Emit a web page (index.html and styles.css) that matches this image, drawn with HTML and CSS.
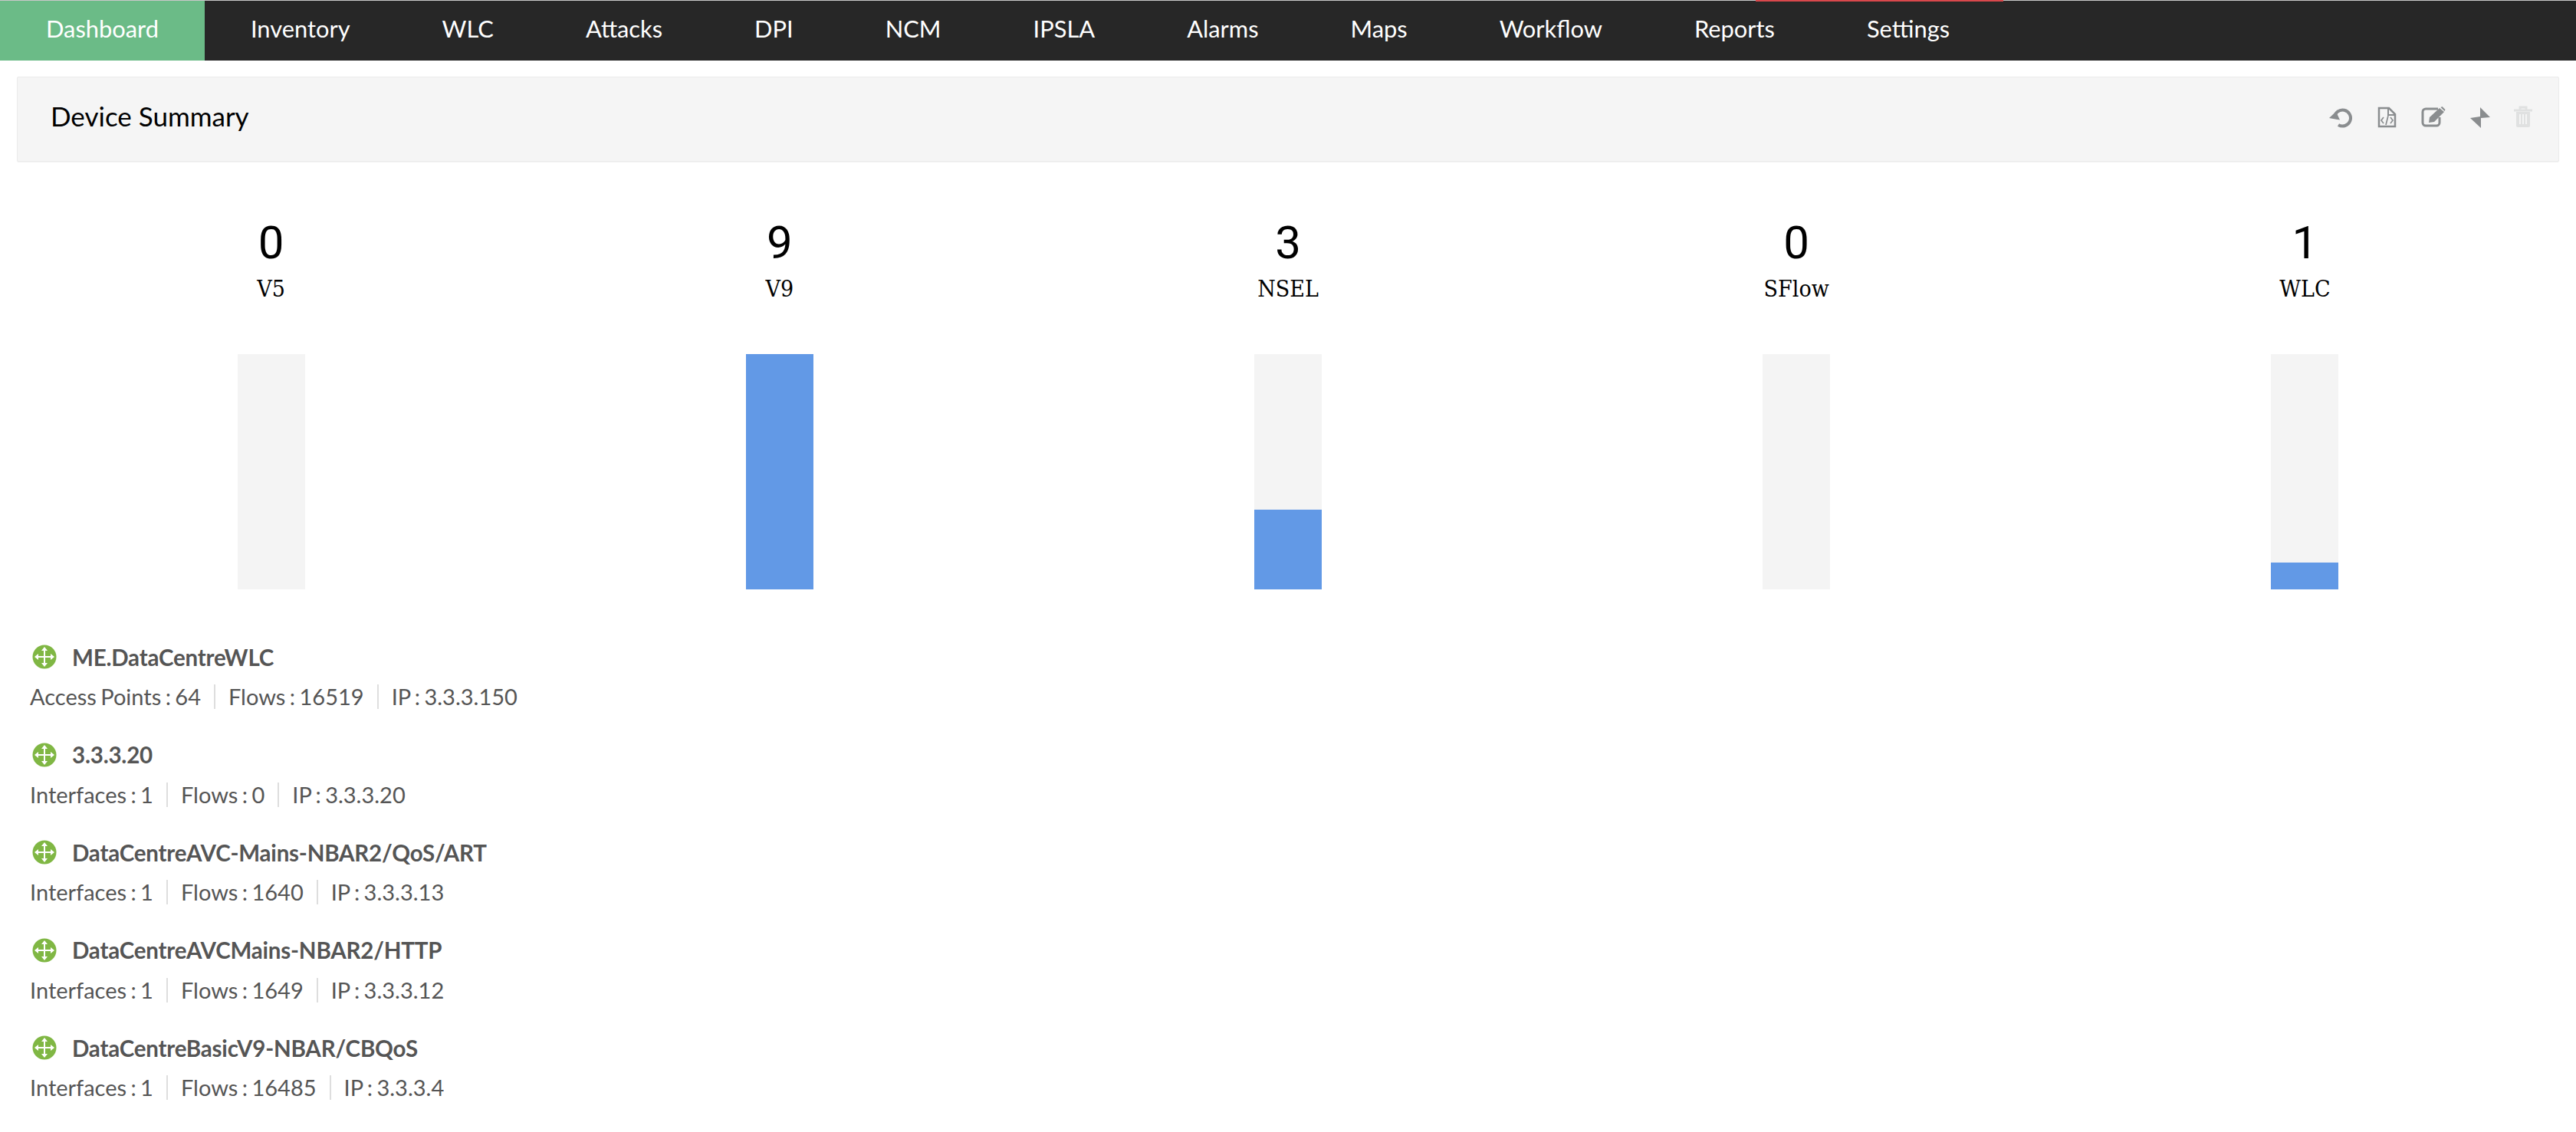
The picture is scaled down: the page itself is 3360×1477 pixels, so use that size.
FILE: index.html
```html
<!DOCTYPE html>
<html>
<head>
  <title>Device Summary</title>
  <link rel="stylesheet" href="styles.css">
</head>
<body>
  <svg class="defs" width="0" height="0">
    <symbol id="moveIcon" viewBox="0 0 32 32">
      <ellipse cx="16" cy="16" rx="15.500" ry="15.500" fill="#80b744"/>
      <path d="M16 6v20M6 16h20" stroke="#fff" stroke-width="2" fill="none"/>
      <path d="M16 3l4 5h-8zM16 29l-4-5h8zM3 16l5-4v8zM29 16l-5 4v-8z" fill="#fff"/>
    </symbol>
  </svg>

  <nav class="topnav">
    <a class="navItem active">Dashboard</a>
    <a class="navItem">Inventory</a>
    <a class="navItem">WLC</a>
    <a class="navItem">Attacks</a>
    <a class="navItem">DPI</a>
    <a class="navItem">NCM</a>
    <a class="navItem">IPSLA</a>
    <a class="navItem">Alarms</a>
    <a class="navItem">Maps</a>
    <a class="navItem">Workflow</a>
    <a class="navItem">Reports</a>
    <a class="navItem">Settings</a>
    <span class="alertLine"></span>
  </nav>

  <header class="panelHead">
    <h2>Device Summary</h2>
    <div class="tools">
      <svg class="tool" viewBox="0 0 30 30">
        <path d="M7 15.500a10.500 10.500 0 1 1 5 9.500" fill="none" stroke="#8a8d8f" stroke-width="4"/>
        <path d="M0 16l9-8.500 5 11z" fill="#8a8d8f"/>
      </svg>
      <svg class="tool" viewBox="0 0 30 30">
        <path d="M5 3h13l8 8v16H5z" fill="none" stroke="#8a8d8f" stroke-width="2.500"/>
        <path d="M17 2v10h9" fill="none" stroke="#8a8d8f" stroke-width="2"/>
        <path d="M11 15l-3 4 3 4M20 15l3 4-3 4M17 13l-3 12" fill="none" stroke="#8a8d8f" stroke-width="1.700"/>
      </svg>
      <svg class="tool toolWide" viewBox="0 0 32 27">
        <path d="M22 3H6a4 4 0 0 0-4 4v14a4 4 0 0 0 4 4h14a4 4 0 0 0 4-4v-7" fill="none" stroke="#8a8d8f" stroke-width="3"/>
        <path d="M11 14L24 2l6 5-13 13-7 1zM25.500 1l2-1 4 4-1 2z" fill="#8a8d8f"/>
      </svg>
      <svg class="tool" viewBox="0 0 30 30">
        <path d="M15 2l13 13-12 1v13L2 16l13-2z" fill="#8a8d8f"/>
      </svg>
      <svg class="tool toolLast" viewBox="0 0 30 30">
        <path d="M3 6h24M11 5V2h8v3" fill="none" stroke="#e0e1e1" stroke-width="3"/>
        <path d="M6 8v18a2 2 0 0 0 2 2h14a2 2 0 0 0 2-2V8z" fill="#e0e1e1"/>
        <path d="M11 11v13M15 11v13M19 11v13" stroke="#f5f5f5" stroke-width="2"/>
      </svg>
    </div>
  </header>

  <section class="stats">
    <div class="stat">
      <div class="statNum">0</div>
      <div class="statName">V5</div>
      <div class="bar"></div>
    </div>
    <div class="stat">
      <div class="statNum">9</div>
      <div class="statName">V9</div>
      <div class="bar"><div class="barFill" style="height: 100%"></div></div>
    </div>
    <div class="stat">
      <div class="statNum">3</div>
      <div class="statName">NSEL</div>
      <div class="bar"><div class="barFill" style="height: 33.8%"></div></div>
    </div>
    <div class="stat">
      <div class="statNum">0</div>
      <div class="statName">SFlow</div>
      <div class="bar"></div>
    </div>
    <div class="stat">
      <div class="statNum">1</div>
      <div class="statName">WLC</div>
      <div class="bar"><div class="barFill" style="height: 11.300%"></div></div>
    </div>
  </section>

  <ul class="devices">
    <li class="device">
      <div class="deviceName"><svg class="moveIcon"><use href="#moveIcon"/></svg>ME.DataCentreWLC</div>
      <div class="deviceMeta"><span>Access Points : 64</span><span>Flows : 16519</span><span>IP : 3.3.3.150</span></div>
    </li>
    <li class="device">
      <div class="deviceName"><svg class="moveIcon"><use href="#moveIcon"/></svg>3.3.3.20</div>
      <div class="deviceMeta"><span>Interfaces : 1</span><span>Flows : 0</span><span>IP : 3.3.3.20</span></div>
    </li>
    <li class="device">
      <div class="deviceName"><svg class="moveIcon"><use href="#moveIcon"/></svg>DataCentreAVC-Mains-NBAR2/QoS/ART</div>
      <div class="deviceMeta"><span>Interfaces : 1</span><span>Flows : 1640</span><span>IP : 3.3.3.13</span></div>
    </li>
    <li class="device">
      <div class="deviceName"><svg class="moveIcon"><use href="#moveIcon"/></svg>DataCentreAVCMains-NBAR2/HTTP</div>
      <div class="deviceMeta"><span>Interfaces : 1</span><span>Flows : 1649</span><span>IP : 3.3.3.12</span></div>
    </li>
    <li class="device">
      <div class="deviceName"><svg class="moveIcon"><use href="#moveIcon"/></svg>DataCentreBasicV9-NBAR/CBQoS</div>
      <div class="deviceMeta"><span>Interfaces : 1</span><span>Flows : 16485</span><span>IP : 3.3.3.4</span></div>
    </li>
  </ul>
</body>
</html>
```

FILE: styles.css
```css
body {
  margin: 0;
  background-color: #fff;
  font-family: 'Lato', sans-serif;
  color: #555;
  overflow: hidden;
}

.defs {
  position: absolute;
}

/* top menu */
.topnav {
  position: relative;
  display: flex;
  height: 78px;
  background-color: #272727;
  border-top: 1px solid #c8c8c8;
}

.navItem {
  padding: 0 60px;
  font-size: 30.850px;
  line-height: 73px;
  color: #fff;
}

.navItem.active {
  background-color: #6bbb87;
}

.alertLine {
  position: absolute;
  top: -1px;
  left: 2290px;
  width: 323px;
  height: 2px;
  background-color: #d9484c;
}

/* panel header */
.panelHead {
  display: flex;
  align-items: center;
  justify-content: space-between;
  height: 109px;
  margin: 21px 22px 0;
  padding: 0 31px 0 43px;
  background-color: #f5f5f5;
  border: 1px solid #ebebeb;
  border-radius: 2px;
  box-shadow: 0 1px 1px rgba(0, 0, 0, 0.05);
}

.panelHead h2 {
  margin: 0 0 10px;
  font-size: 35px;
  font-weight: 400;
  color: #000;
}

.tools {
  display: flex;
  align-items: center;
  gap: 30px;
  margin-bottom: 6px;
}

.tool {
  width: 30px;
  height: 30px;
}

.toolWide {
  width: 32px;
  height: 27px;
}

.toolLast {
  margin-left: -4px;
}

/* protocol counters */
.stats {
  display: grid;
  grid-template-columns: repeat(5, 1fr);
  margin: 0 22px;
  padding-top: 76px;
  text-align: center;
  color: #000;
}

.statNum {
  font-family: 'Roboto', sans-serif;
  font-size: 60px;
  line-height: 60px;
}

.statName {
  margin-top: 10px;
  font-family: 'DejaVu Serif', serif;
  font-size: 30px;
  font-stretch: condensed;
  line-height: 40px;
}

.bar {
  display: flex;
  align-items: flex-end;
  width: 88px;
  height: 307px;
  margin: 65px auto 0;
  background-color: #f4f4f4;
}

.barFill {
  width: 100%;
  background-color: #6299e6;
}

/* device list */
.devices {
  margin: 0;
  padding: 69px 0 0 39px;
  list-style: none;
}

.device {
  height: 87px;
  margin-bottom: 40.5px;
}

.deviceName {
  display: flex;
  align-items: center;
  gap: 20px;
  height: 38px;
  padding-left: 3px;
  font-size: 29.500px;
  font-weight: 700;
  letter-spacing: -0.2px;
}

.moveIcon {
  width: 32px;
  height: 32px;
}

.deviceMeta {
  display: flex;
  margin-top: 17px;
  font-size: 29px;
  word-spacing: -2px;
  line-height: 32px;
}

.deviceMeta span {
  padding: 0 17px;
  border-right: 2px solid #dedede;
}

.deviceMeta span:first-child {
  padding-left: 0;
}

.deviceMeta span:last-child {
  border-right: none;
}
```
